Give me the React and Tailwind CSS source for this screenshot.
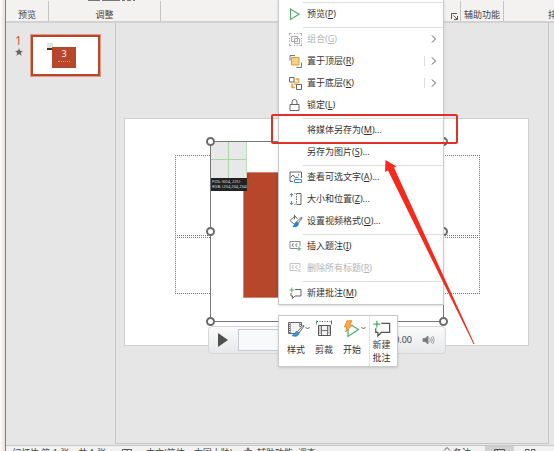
import React from 'react';

const PreviewIcon = () => (
  <svg width="12" height="14" viewBox="0 0 12 14" fill="none" stroke="#4ea968" strokeWidth="1.1">
    <path d="M1.500 2v10.400L10 7.200z" />
  </svg>
);

const GroupIcon = () => (
  <svg width="13" height="13" viewBox="0 0 13 13" fill="none" stroke="#a6a6a6">
    <path d="M2.500 3.500h6v5h-6zM5.500 5.500h5v5h-5z" />
    <path d="M.5 2.500v-2h2M10.500.5h2v2M12.500 10.500v2h-2M2.500 12.500h-2v-2M5 .5h1M7.500.5h1M5 12.500h1M7.500 12.500h1M.5 5v1M.5 7.500v1M12.500 5v1M12.500 7.500v1" />
  </svg>
);

const FrontIcon = () => (
  <svg width="13" height="13" viewBox="0 0 13 13" fill="none" stroke="#777">
    <path d="M1 5.500V.5h5M12.500 7.500v5h-5" />
    <path d="M2.500 2.500h7.500v7.500H2.500z" fill="#f8cf85" stroke="#e09a3a" />
  </svg>
);

const BackIcon = () => (
  <svg width="13" height="13" viewBox="0 0 13 13" fill="none" stroke="#666">
    <path d="M6.500 2h3v4M3 6.500v4h3" stroke="#e8a33d" strokeWidth="1.600" />
    <path d="M5.500 5h2.500v2.500H5.500z" fill="#f8cf85" stroke="#f0b75e" />
    <path d="M.5.5H5V5H.5zM7.500 7.500h5v5h-5z" fill="#fff" />
  </svg>
);

const LockIcon = () => (
  <svg width="12" height="14" viewBox="0 0 12 14" fill="none" stroke="#666">
    <path d="M1 6.500h9v6H1zM3 6.500V4a2.500 2.500 0 0 1 5 0v2.500" />
  </svg>
);

const AltTextIcon = () => (
  <svg width="14" height="12" viewBox="0 0 14 12" fill="none" stroke="#666">
    <path d="M4 10.500H1v-9.500h11.500V7" />
    <path d="M1.500 6.500l2.500-2.500 2.500 3 1.500-1 1.500 1" />
    <circle cx="9.500" cy="3.800" r=".7" fill="#666" stroke="none" />
    <path d="M5.500 8.500h7v3h-7z" stroke="#4095c8" fill="#fff" />
  </svg>
);

const SizeIcon = () => (
  <svg width="14" height="14" viewBox="0 0 14 14" fill="none" stroke="#666">
    <path d="M2.500 1.500v3.500M2.500 9v3.500M.8 3.200l1.700-1.700 1.700 1.700M.8 10.800l1.700 1.700 1.700-1.700" stroke="#3c8fc4" />
    <path d="M8 1.500h4v11H8" />
    <path d="M7.500 1.500v11M5.500 1.500h1M5.500 12.500h1" strokeDasharray="1.500 1" />
  </svg>
);

const FormatIcon = () => (
  <svg width="14" height="14" viewBox="0 0 14 14" fill="none" stroke="#666">
    <path d="M6 2L1 6.500l4 3.500M6 2l2.500 3M5.500.8v4.500" />
    <path d="M12.500 3L7.500 8l1.500 1.500 4-5.500z" fill="#fff" />
    <path d="M7.500 8c-2 .5-1.500 3-3.500 4.500 3 .8 5.500-.2 5.200-3z" fill="#2e83c1" stroke="#2e83c1" />
  </svg>
);

const CaptionIcon = ({ muted }) => (
  <svg width="13" height="12" viewBox="0 0 13 12" fill="none" stroke={muted ? '#c4c4c4' : '#8a8a8a'}>
    <path d="M8 8.500H1v-7h10V6" />
    <path d="M5 3.800a1.300 1.300 0 1 0 0 2.400M8.500 3.800a1.300 1.300 0 1 0 0 2.400" />
    {muted ? <path d="M8.500 7l3 3M11.500 7l-3 3" /> : <path d="M10 6.500v4.500M7.800 8.800h4.500" stroke="#4ea968" />}
  </svg>
);

const CommentIcon = ({ size = 13 }) => (
  <svg width={size} height={size} viewBox="0 0 13 13" fill="none" stroke="#555" strokeWidth="0.9">
    <path d="M6 2.500h6v6.500H6L3.500 11.500V9H2V6" />
    <path d="M2.800.5v5M.3 3h5" stroke="#4ea968" />
  </svg>
);

const Chevron = () => (
  <svg width="6" height="8" viewBox="0 0 6 8" fill="none" stroke="#555">
    <path d="M1 .5L4.500 4 1 7.500" />
  </svg>
);

const DownChevron = () => (
  <svg width="5" height="4" viewBox="0 0 5 4" fill="none" stroke="#555" className="mt-1.5">
    <path d="M.5 1l2 2 2-2" />
  </svg>
);

const StyleIcon = () => (
  <svg width="18" height="18" viewBox="0 0 18 18" fill="none" stroke="#666">
    <path d="M14.500 6V2.500h-13v11H8" fill="#f2f2f2" />
    <path d="M3.500 3v10M12.500 3v4" stroke="#999" />
    <path d="M2.500 4v9M13.500 4v3" strokeDasharray="1 1" />
    <path d="M16.500 5l-6 6.500 1.500 1.500 5-7z" fill="#fff" />
    <path d="M10 11.500c-2 0-1.500 3-5 4 3.500 1.500 7 .5 7-2.500z" fill="#4095d0" stroke="#3b87bd" />
  </svg>
);

const TrimIcon = () => (
  <svg width="18" height="18" viewBox="0 0 18 18" fill="none" stroke="#555">
    <path d="M2 1.500h14" strokeDasharray="1 1.500" />
    <path d="M1.500.5v4" stroke="#4ea968" />
    <path d="M16.500.5v4" stroke="#d0433c" />
    <path d="M3.500 5.500h12v10h-12z" fill="#f2f2f2" />
    <path d="M6.500 6v9M12.500 6v9M7 10.500h5" strokeWidth=".8" />
    <path d="M5 6.500v8M14 6.500v8" strokeDasharray="1 1" />
  </svg>
);

const StartIcon = () => (
  <svg width="18" height="18" viewBox="0 0 18 18" fill="none">
    <path d="M5 9v7.500L15.500 9.500 9 5.500" stroke="#4ea968" strokeWidth="1.200" />
    <path d="M4 .8h5L6.500 5h3L2.500 12l1.500-5H1.500z" fill="#f6b04a" stroke="#e07b1c" strokeWidth=".8" />
  </svg>
);

const menu = [
  { divider: true },
  { label: '预览', hotkey: 'P', icon: PreviewIcon },
  { divider: true },
  { label: '组合', hotkey: 'G', icon: GroupIcon, disabled: true, arrow: true },
  { label: '置于顶层', hotkey: 'R', icon: FrontIcon, arrow: true, split: true },
  { label: '置于底层', hotkey: 'K', icon: BackIcon, arrow: true, split: true },
  { label: '锁定', hotkey: 'L', icon: LockIcon },
  { divider: true },
  { label: '将媒体另存为', hotkey: 'M', more: true },
  { label: '另存为图片', hotkey: 'S', more: true },
  { divider: true },
  { label: '查看可选文字', hotkey: 'A', icon: AltTextIcon, more: true },
  { label: '大小和位置', hotkey: 'Z', icon: SizeIcon, more: true },
  { label: '设置视频格式', hotkey: 'O', icon: FormatIcon, more: true },
  { divider: true },
  { label: '插入题注', hotkey: 'I', icon: CaptionIcon },
  { label: '删除所有标题', hotkey: 'R', icon: CaptionIcon, disabled: true },
  { divider: true },
  { label: '新建批注', hotkey: 'M', icon: CommentIcon },
];

const MenuItem = ({ item }) => {
  const Icon = item.icon;
  return (
    <button
      type="button"
      disabled={item.disabled}
      className="flex h-[22px] w-full items-center pl-2.5 pr-1.5 text-left text-[#333] disabled:text-[#b4b4b4]"
    >
      <span className="flex w-[18px] items-center">{Icon && <Icon muted={item.disabled} />}</span>
      <span className="flex-1">
        {item.label}(<u>{item.hotkey}</u>){item.more && '...'}
      </span>
      {item.split && <span className="mr-1.5 h-2.5 border-l border-[#ddd]" />}
      {item.arrow && <Chevron />}
    </button>
  );
};

const ContextMenu = () => (
  <div className="absolute left-[278px] top-0 w-[166px] border border-t-0 border-[#c9c9c9] bg-white shadow-sm">
    {menu.map((item, i) =>
      item.divider ? (
        <div key={i} className="ml-6 h-[3px] border-b border-[#dedede]" />
      ) : (
        <MenuItem key={i} item={item} />
      )
    )}
  </div>
);

const MiniToolbar = () => (
  <div className="absolute left-[278px] top-[315px] flex h-[52px] w-[120px] border border-[#c9c9c9] bg-white pl-2 text-[#333] shadow-sm">
    <button type="button" className="flex w-7 flex-col items-start gap-1.5 pt-1">
      <span className="flex"><StyleIcon /><DownChevron /></span>
      样式
    </button>
    <button type="button" className="flex w-7 flex-col items-start gap-1.5 pt-1">
      <TrimIcon />
      剪裁
    </button>
    <button type="button" className="flex w-[26px] flex-col items-start gap-1.5 pt-1">
      <span className="flex"><StartIcon /><DownChevron /></span>
      开始
    </button>
    <button type="button" className="flex flex-1 flex-col items-center border-l border-[#e2e2e2] pr-1 pt-1 leading-[13px]">
      <CommentIcon size={18} />
      <span>新建</span>
      <span>批注</span>
    </button>
  </div>
);

const Ribbon = () => (
  <header className="flex h-[23px] shrink-0 border-b-2 border-[#d2d2d2] bg-[#f3f2f1] text-[#444]">
    <div className="mt-px flex w-[43px] items-end justify-center border-r border-[#c4c4c4]">预览</div>
    <div className="relative mt-px flex w-28 items-end justify-center border-r border-[#c4c4c4]">
      <svg width="50" height="2" viewBox="0 0 50 2" className="absolute -top-px left-[39px]" fill="#777">
        <path d="M0 0h12v1H0zM14 0h18v1H14zM34 0h3v1h-3zM39 0h4v1h-4zM45 0h2v1h-2z" />
      </svg>
      调整
    </div>
    <div className="mt-px flex flex-1 items-end justify-end border-r border-[#c4c4c4] pb-px pr-0.5">
      <svg width="7" height="7" viewBox="0 0 7 7" fill="none" stroke="#555">
        <path d="M.5 6V.5H6M2.500 2.500l3.500 3.500M6.500 3v3.500H3" />
      </svg>
    </div>
    <div className="mt-px flex w-[43px] items-end justify-center border-r border-[#c4c4c4]">辅助功能</div>
    <div className="mt-px flex w-[50px] items-end overflow-hidden pl-11 whitespace-nowrap">排列</div>
  </header>
);

const Thumbnails = () => (
  <aside className="flex w-[110px] shrink-0 items-start gap-2 border-r border-[#c6c6c6] pl-2 pt-3">
    <div className="flex w-[9px] flex-col items-center text-xs leading-3 text-[#d0583c]">
      1
      <svg width="8" height="8" viewBox="0 0 10 10" fill="#666" className="mt-px">
        <path d="M5 0l1.300 3.400L10 3.600 7.200 6l1 3.700L5 7.600 1.800 9.700l1-3.700L0 3.600l3.700-.2z" />
      </svg>
    </div>
    <div className="relative h-[41px] w-[69px] border-2 border-[#b7472a] bg-white outline outline-[#dd9a86]">
      <div className="absolute left-3.5 top-1.5 h-[7px] w-[6px] border-b-2 border-[#333] bg-[#dfe6df]" />
      <div className="absolute left-[19px] top-2.5 flex h-[21px] w-6 flex-col items-center bg-[#b7472a] text-white">
        <span className="h-3.5 text-[9px] leading-[14px]">3</span>
        <span className="w-3 border-b border-dotted border-[#dd9c8a]" />
      </div>
    </div>
  </aside>
);

const handles = [
  'left-[81px] top-[18px]',
  'left-[314px] top-[18px]',
  'left-[81px] top-[108px]',
  'left-[314px] top-[108px]',
  'left-[81px] top-[198px]',
  'left-[314px] top-[198px]',
];

const Slide = () => (
  <section className="relative aspect-[405/228] w-full border border-[#cfcfcf] bg-white">
    <div className="absolute left-[50px] top-9 h-[81px] w-[305px] border border-dotted border-[#777]" />
    <div className="absolute left-[50px] top-[118px] h-[57px] w-[305px] border border-dotted border-[#777]" />
    <div className="absolute left-[85px] top-[22px] h-[181px] w-[234px] border border-[#777] bg-white">
      <div className="absolute left-8 top-[30px] h-[126px] w-32 border border-[#cf8571] bg-[#b7472a]" />
      <div className="absolute left-8 top-[31px] size-1.5 rounded-full bg-[#d8231f]" />
      <div className="absolute left-0 top-0 grid h-9 w-9 grid-cols-2 grid-rows-2 border-r border-[#b9dcb9] bg-[#e8e8e8]">
        <span className="border-b border-r border-[#a9d6a9]" />
        <span className="border-b border-[#a9d6a9]" />
        <span className="border-r border-[#a9d6a9]" />
      </div>
      <div className="absolute left-0 top-9 flex h-[13px] w-9 flex-col justify-center overflow-hidden bg-[#222] pl-px text-[4px] leading-[5px] whitespace-nowrap text-[#ddd]">
        <span>POS: (604, 225)</span>
        <span>RGB: (234,234,234)</span>
      </div>
    </div>
    {handles.map((pos) => (
      <span key={pos} className={`absolute size-[9px] rounded-full border-2 border-[#6b6b6b] bg-white ${pos}`} />
    ))}
    <div className="absolute left-[83px] top-[207px] flex h-7 w-[238px] items-center gap-2.5 rounded-sm border border-[#d6d6d6] bg-linear-to-b from-[#fbfbfb] to-[#e6e8ea] pl-2 pr-2.5 text-[#444]">
      <button type="button" aria-label="播放">
        <svg width="11" height="14" viewBox="0 0 11 14" fill="#505050"><path d="M1 0v14l10-7z" /></svg>
      </button>
      <div className="h-[22px] flex-1 border border-[#c5cad0] bg-[#f7f9fb]" />
      <span>00.00</span>
      <svg width="13" height="12" viewBox="0 0 13 12" fill="none" stroke="#888">
        <path d="M1 4.500h2l3-2.500v8L3 7.500H1z" fill="#777" />
        <path d="M7.500 4c1 1.200 1 2.800 0 4M9 3c1.500 1.800 1.500 4.200 0 6M10.500 2c2 2.400 2 5.600 0 8" strokeWidth=".8" />
      </svg>
    </div>
  </section>
);

const StatusBar = () => (
  <footer className="flex h-1.5 shrink-0 items-start overflow-hidden border-t border-[#c6c6c6] bg-[#f3f2f1] leading-[14px] whitespace-nowrap text-[#444]">
    <span className="w-[116px] pl-1.5">幻灯片 第 1 张，共 1 张</span>
    <svg width="10" height="12" viewBox="0 0 10 12" fill="none" stroke="#555" className="mr-3.5 shrink-0">
      <path d="M.5 3.500h9v8h-9zM5 4v7" />
    </svg>
    <span className="w-[97px]">中文(简体，中国大陆)</span>
    <svg width="10" height="12" viewBox="0 0 10 12" fill="none" stroke="#555" className="mr-1 shrink-0">
      <path d="M5 2a1 1 0 0 1 0 2 1 1 0 0 1 0-2M1 5l8-.5M5 5v4" />
    </svg>
    <span className="flex-1">辅助功能: 调查</span>
    <svg width="8" height="12" viewBox="0 0 8 12" fill="none" stroke="#555" className="mr-0.5 shrink-0">
      <path d="M1 4.500l3-3 3 3M0 6.500h8" />
    </svg>
    <span className="w-8">备注</span>
    <span className="flex w-[29px] justify-center bg-[#d2d0ce]">
      <svg width="11" height="12" viewBox="0 0 11 12" fill="none" stroke="#555">
        <path d="M.5 3.500h10v8H.5zM3.500 4v7" />
      </svg>
    </span>
    <span className="flex w-10 pl-[11px]">
      <svg width="11" height="12" viewBox="0 0 11 12" fill="none" stroke="#555">
        <path d="M.5 3.500h3.500v3H.5zM6.500 3.500H10v3H6.500z" />
      </svg>
    </span>
  </footer>
);

export default function App() {
  return (
    <div className="relative flex h-screen overflow-hidden bg-white font-['Noto_Sans','Noto_Sans_CJK_SC',sans-serif] text-[9px] leading-3">
      <div className="w-1.5 shrink-0 border-r border-[#b0705f] bg-linear-to-r from-white to-[#eadfdb]" />
      <div className="flex min-w-0 flex-1 flex-col">
        <Ribbon />
        <div className="flex min-h-0 flex-1 bg-[#e6e6e6] pb-px">
          <Thumbnails />
          <main className="mr-[5px] flex flex-1 items-center border-b border-r border-[#c6c6c6] pb-[3px] pl-2 pr-[19px]">
            <Slide />
          </main>
        </div>
        <StatusBar />
      </div>

      <ContextMenu />
      <MiniToolbar />

      {/* annotation box and arrow */}
      <div className="absolute left-[271px] top-[114px] h-[30px] w-[187px] rounded-xs border-2 border-[#e0302a]" />
      <svg width="92" height="188" viewBox="0 0 92 188" className="pointer-events-none absolute left-[384px] top-[158px]" fill="#f5291c">
        <path d="M1.500 2l11 6.500-2.500 1L90.500 186h-1L4 12.500 1 14z" />
      </svg>
    </div>
  );
}
